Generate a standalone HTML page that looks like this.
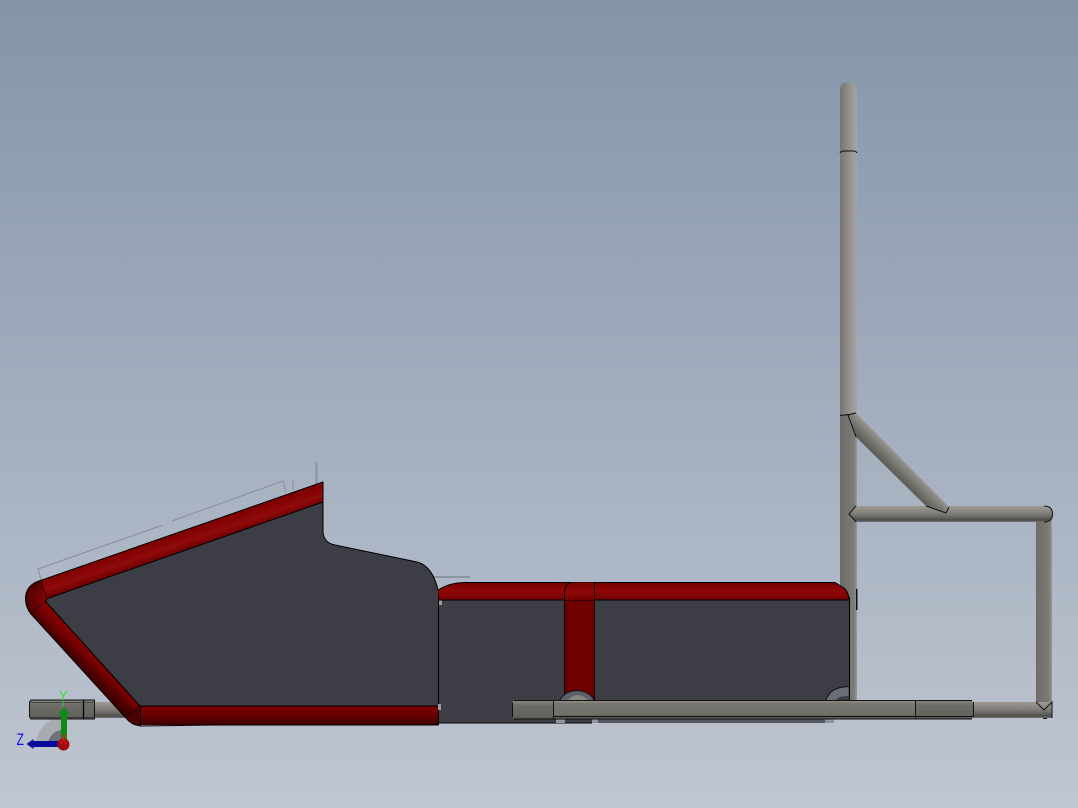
<!DOCTYPE html>
<html lang="en">
<head>
<meta charset="utf-8">
<title>CAD model side view</title>
<style>
html,body{margin:0;padding:0;width:1078px;height:808px;overflow:hidden;background:#a4aebe}
svg{display:block}
</style>
</head>
<body>
<svg width="1078" height="808" viewBox="0 0 1078 808" xmlns="http://www.w3.org/2000/svg">
<defs>
<linearGradient id="bg" x1="0" y1="0" x2="0" y2="1">
<stop offset="0" stop-color="#8495aa"/>
<stop offset="1" stop-color="#c0c6d1"/>
</linearGradient>
<linearGradient id="rTop" gradientUnits="userSpaceOnUse" x1="40.5" y1="580.5" x2="46.7" y2="598.7">
<stop offset="0" stop-color="#7e0000"/>
<stop offset=".55" stop-color="#900a0a"/>
<stop offset="1" stop-color="#6c0000"/>
</linearGradient>
<linearGradient id="rDiag" gradientUnits="userSpaceOnUse" x1="32" y1="616" x2="46" y2="602">
<stop offset="0" stop-color="#420000"/>
<stop offset=".5" stop-color="#740000"/>
<stop offset="1" stop-color="#8a0404"/>
</linearGradient>
<linearGradient id="rBot" x1="0" y1="0" x2="0" y2="1">
<stop offset="0" stop-color="#780000"/>
<stop offset=".5" stop-color="#680000"/>
<stop offset="1" stop-color="#3c0000"/>
</linearGradient>
<linearGradient id="rBox" x1="0" y1="0" x2="0" y2="1">
<stop offset="0" stop-color="#7a0000"/>
<stop offset=".55" stop-color="#900808"/>
<stop offset="1" stop-color="#720000"/>
</linearGradient>
<radialGradient id="rCorner" gradientUnits="userSpaceOnUse" cx="47" cy="598" r="22">
<stop offset="0" stop-color="#8a0404"/>
<stop offset="1" stop-color="#4a0000"/>
</radialGradient>
<linearGradient id="tV" x1="0" y1="0" x2="1" y2="0">
<stop offset="0" stop-color="#6e6c68"/>
<stop offset=".5" stop-color="#777570"/>
<stop offset=".85" stop-color="#7f7d79"/>
<stop offset="1" stop-color="#9a9b9b"/>
</linearGradient>
<linearGradient id="tVTop" x1="0" y1="0" x2="1" y2="0">
<stop offset="0" stop-color="#76746f"/>
<stop offset=".6" stop-color="#96948f"/>
<stop offset="1" stop-color="#a3a5a7"/>
</linearGradient>
<linearGradient id="tH" x1="0" y1="0" x2="0" y2="1">
<stop offset="0" stop-color="#9c9a92"/>
<stop offset=".5" stop-color="#7e7c76"/>
<stop offset=".88" stop-color="#4e4e4c"/>
<stop offset="1" stop-color="#707172"/>
</linearGradient>
<linearGradient id="tD" gradientUnits="userSpaceOnUse" x1="857" y1="413" x2="845" y2="425">
<stop offset="0" stop-color="#9a9890"/>
<stop offset=".5" stop-color="#7a7873"/>
<stop offset="1" stop-color="#5c5b57"/>
</linearGradient>
<linearGradient id="bar" x1="0" y1="0" x2="0" y2="1">
<stop offset="0" stop-color="#a09e94"/>
<stop offset=".12" stop-color="#7b7972"/>
<stop offset=".8" stop-color="#6f6d68"/>
<stop offset=".85" stop-color="#4e4d4a"/>
<stop offset="1" stop-color="#6b6a66"/>
</linearGradient>
<linearGradient id="barD" x1="0" y1="0" x2="0" y2="1">
<stop offset="0" stop-color="#858379"/>
<stop offset=".3" stop-color="#6c6b65"/>
<stop offset=".85" stop-color="#63625d"/>
<stop offset="1" stop-color="#55544f"/>
</linearGradient>
</defs>

<rect width="1078" height="808" fill="url(#bg)"/>

<!-- construction lines -->
<g fill="none" stroke="#8a8f96" stroke-width="1">
<path d="M41 580L38 569L163 525M172 521L283 481L286 492"/>
<path d="M293 480V490"/>
</g>
<rect x="315.500" y="462" width="2" height="22" fill="#8e949c"/>
<rect x="434" y="576" width="36" height="2" fill="#8e949c"/>

<!-- triad arc -->
<path d="M36 745A28 28 0 0 1 64 717V731A14 14 0 0 0 49 745Z" fill="#a8abaf"/>
<path d="M48 745A15 15 0 0 1 63 730V745Z" fill="#6d7179"/>

<!-- stub left -->
<rect x="95" y="702" width="34" height="16" fill="url(#tH)"/>
<path d="M31 700H94.500V719H31L29.500 717V702Z" fill="url(#barD)" stroke="#111" stroke-width="1"/>
<path d="M29.500 702.500H94.500M29.500 717.500H94.500" stroke="#333" stroke-width=".7" fill="none"/>
<path d="M83.500 700V719" stroke="#000" stroke-width="1.300"/>

<!-- right tubes -->
<rect x="840" y="414" width="17" height="288" fill="url(#tV)"/>
<path d="M840 415V90Q840 82 848.500 82Q857 82 857 90V413Z" fill="url(#tVTop)"/>
<path d="M840 153Q841 151 844 151H853Q856 151 857 153" fill="none" stroke="#111" stroke-width="1"/>
<path d="M840 415.500L849 414.500L856 413" fill="none" stroke="#111" stroke-width="1"/>
<rect x="1036" y="520" width="16" height="184" fill="url(#tV)"/>
<path d="M856 506H1045Q1053 506 1053 514Q1053 522 1045 522H856L849 514Z" fill="url(#tH)"/>
<path d="M856 506L849 514L856 522M1044 506Q1052.500 506 1052.500 514Q1052.500 522 1044 522" fill="none" stroke="#111" stroke-width="1"/>
<path d="M848 415L856 413L949 507L946 513L926 506L856 437Z" fill="url(#tD)"/>
<path d="M856 437L848 415L856 413M926 506L946 513L949 507" fill="none" stroke="#111" stroke-width="1"/>
<rect x="973" y="702" width="79" height="16" fill="url(#tH)"/>
<path d="M1036 702L1044 710L1052 702V718" fill="none" stroke="#111" stroke-width="1"/>
<rect x="1043" y="718" width="4" height="1" fill="#111"/>
<path d="M856 589H857.500V610H856" fill="#111"/>

<!-- left body -->
<path d="M38 597L323 502V532Q324 543 335 545L417 562Q433 566 438 592V706H140Z" fill="#3c3d45"/>
<path d="M323 502V532Q324 543 335 545L417 562Q433 566 438.500 592V723" fill="none" stroke="#000" stroke-width="1"/>

<!-- right body -->
<path d="M439 599H849V702H834V723H439Z" fill="#3c3d45"/>
<path d="M438.500 723H592M849.500 597V702" stroke="#000" stroke-width="1" fill="none"/>

<!-- left red tube -->
<path d="M40.500 580.500L323 482V502L46.700 598.700Z" fill="url(#rTop)"/>
<path d="M40.500 580.500L323 482V502L46.700 598.700L40.500 580.500" fill="none" stroke="#000" stroke-width="1"/>
<path d="M40.500 580.500Q25 585 25.500 600Q26 608 31 614L46 602L46.700 598.700Z" fill="url(#rCorner)"/>
<path d="M40.500 580.500Q25 585 25.500 600Q26 608 31 614L46 602L46.700 598.700" fill="none" stroke="#000" stroke-width="1"/>
<path d="M31 614L46 602L140 706L125 717Z" fill="url(#rDiag)"/>
<path d="M31 614L125 717M46 602L140 706L125 717" fill="none" stroke="#000" stroke-width="1"/>
<path d="M125 717Q131 725 140 726V706Z" fill="#4a0000"/>
<path d="M125 717Q131 725 140 726" fill="none" stroke="#000" stroke-width=".8"/>
<rect x="140.500" y="706" width="298" height="19" fill="url(#rBot)"/>
<path d="M438.500 725H215L140.500 726V706H438.500" fill="none" stroke="#000" stroke-width="1"/>
<path d="M438.500 706V725" stroke="#000" stroke-width="1"/>
<path d="M438 704h3v6h-3zM439 597h3v8h-3z" fill="#9a9c9e"/>

<!-- right red top -->
<path d="M438.500 590Q448 583 465 582.500H835L844 588Q849 593 849 599.500H438.500Z" fill="url(#rBox)"/>
<path d="M438.500 590Q448 583 465 582.500H835L844 588Q849 593 849 599.500M438.500 600H849" fill="none" stroke="#000" stroke-width="1"/>
<path d="M564.500 600V594Q565 583 573 582.500H594.500V600Z" fill="url(#rBox)"/>
<path d="M564.500 600V594Q565 583 571 582.500M594.500 582V600" fill="none" stroke="#000" stroke-width="1"/>
<rect x="564.500" y="600.500" width="30" height="100" fill="#6e0000"/>
<path d="M564.500 600V700M594.500 600V700" stroke="#000" stroke-width="1"/>

<!-- clamps -->
<path d="M560 700A18 14 0 0 1 594 700Z" fill="#5d6069"/>
<path d="M568 700Q577 690 588 700Z" fill="#868680"/>
<path d="M560 700A18 14 0 0 1 594 700" fill="none" stroke="#111" stroke-width="1"/>
<path d="M826 700Q830 687 848.500 686.500V696Q838 696 836 700Z" fill="#6a6e78"/>
<path d="M826 700Q830 687 848.500 686.500" fill="none" stroke="#111" stroke-width="1"/>

<!-- long bar -->
<rect x="556" y="719" width="9" height="4" fill="#8f94a3"/>
<rect x="592" y="719" width="6" height="4" fill="#8f94a3"/>
<rect x="598" y="719" width="227" height="4" fill="#55585f"/>
<rect x="825" y="719" width="9" height="4" fill="#8f94a3"/>
<path d="M513 701H553V719H513L512.500 717V703Z" fill="url(#barD)"/>
<rect x="553" y="700.500" width="362" height="18.500" fill="url(#bar)"/>
<path d="M915 700.500H972L973 702V717L972 719H915Z" fill="url(#barD)"/>
<path d="M514 700.500H915M514 719H972M553.500 700V719M915.500 700V719M512.500 703V717M973.500 702V717M915 700.500H972M553 716.500H973" fill="none" stroke="#111" stroke-width="1"/>

<!-- triad -->
<rect x="61" y="712" width="6" height="28" fill="#0b8a14"/>
<path d="M58.500 714L64 707L69.500 714Z" fill="#0b8a14"/>
<rect x="33" y="741" width="26" height="6" fill="#0a0a9a"/>
<path d="M33.500 739V749L26.500 744Z" fill="#0a0a9a"/>
<circle cx="63.500" cy="744.500" r="6" fill="#a00c0c"/>
<path d="M60.500 734L66.500 744M66.500 734L60.500 744" stroke="#f01818" stroke-width="1"/>
<rect x="62.500" y="701" width="1" height="6" fill="#35d335"/>
<text x="59" y="700" font-family="'Liberation Sans',sans-serif" font-size="13" fill="#2fe32f">Y</text>
<text transform="translate(16.500 745) scale(.72 1)" font-family="'Liberation Sans',sans-serif" font-size="17" fill="#1111ee">Z</text>
</svg>
</body>
</html>
